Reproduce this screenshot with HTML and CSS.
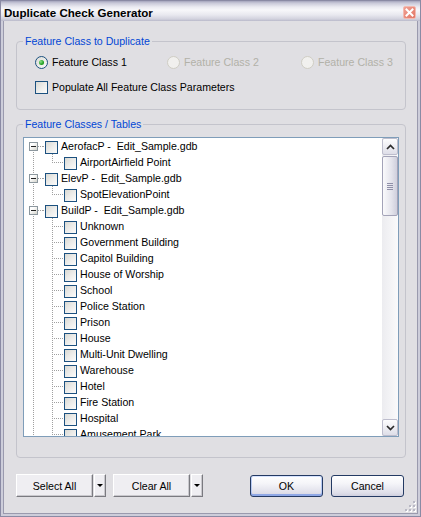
FILE: index.html
```html
<!DOCTYPE html>
<html>
<head>
<meta charset="utf-8">
<title>Duplicate Check Generator</title>
<link rel="stylesheet" href="styles.css">
</head>
<body>
<div class="window">
  <div class="titlebar">
    <span class="title">Duplicate Check Generator</span>
    <span class="close"><svg width="11" height="11" viewBox="0 0 11 11"><path d="M2.5 2.5 L8.5 8.5 M8.5 2.5 L2.5 8.5" stroke="#fff" stroke-width="2" stroke-linecap="square"/></svg></span>
  </div>
  <div class="client">
    <fieldset class="group g1">
      <legend>Feature Class to Duplicate</legend>
      <div class="inner">
        <div class="radios">
          <label class="opt w1"><span class="radio checked"></span><span class="otext">Feature Class 1</span></label>
          <label class="opt w2 disabled"><span class="radio"></span><span class="otext">Feature Class 2</span></label>
          <label class="opt disabled"><span class="radio"></span><span class="otext">Feature Class 3</span></label>
        </div>
        <label class="opt populate"><span class="cb"></span><span class="otext">Populate All Feature Class Parameters</span></label>
      </div>
    </fieldset>

    <fieldset class="group g2">
      <legend>Feature Classes / Tables</legend>
      <div class="inner">
        <div class="tree">
          <div class="rows">
            <div class="row"><span class="c1 root first"><span class="exp"></span></span><span class="c2r"><span class="cb"></span></span><span class="lbl">AerofacP -  Edit_Sample.gdb</span></div>
            <div class="row"><span class="c1 line"></span><span class="c2c last"></span><span class="cb"></span><span class="lbl">AirportAirfield Point</span></div>
            <div class="row"><span class="c1 root"><span class="exp"></span></span><span class="c2r"><span class="cb"></span></span><span class="lbl">ElevP -  Edit_Sample.gdb</span></div>
            <div class="row"><span class="c1 line"></span><span class="c2c last"></span><span class="cb"></span><span class="lbl">SpotElevationPoint</span></div>
            <div class="row"><span class="c1 root"><span class="exp"></span></span><span class="c2r"><span class="cb"></span></span><span class="lbl">BuildP -  Edit_Sample.gdb</span></div>
            <div class="row"><span class="c1 line"></span><span class="c2c"></span><span class="cb"></span><span class="lbl">Unknown</span></div>
            <div class="row"><span class="c1 line"></span><span class="c2c"></span><span class="cb"></span><span class="lbl">Government Building</span></div>
            <div class="row"><span class="c1 line"></span><span class="c2c"></span><span class="cb"></span><span class="lbl">Capitol Building</span></div>
            <div class="row"><span class="c1 line"></span><span class="c2c"></span><span class="cb"></span><span class="lbl">House of Worship</span></div>
            <div class="row"><span class="c1 line"></span><span class="c2c"></span><span class="cb"></span><span class="lbl">School</span></div>
            <div class="row"><span class="c1 line"></span><span class="c2c"></span><span class="cb"></span><span class="lbl">Police Station</span></div>
            <div class="row"><span class="c1 line"></span><span class="c2c"></span><span class="cb"></span><span class="lbl">Prison</span></div>
            <div class="row"><span class="c1 line"></span><span class="c2c"></span><span class="cb"></span><span class="lbl">House</span></div>
            <div class="row"><span class="c1 line"></span><span class="c2c"></span><span class="cb"></span><span class="lbl">Multi-Unit Dwelling</span></div>
            <div class="row"><span class="c1 line"></span><span class="c2c"></span><span class="cb"></span><span class="lbl">Warehouse</span></div>
            <div class="row"><span class="c1 line"></span><span class="c2c"></span><span class="cb"></span><span class="lbl">Hotel</span></div>
            <div class="row"><span class="c1 line"></span><span class="c2c"></span><span class="cb"></span><span class="lbl">Fire Station</span></div>
            <div class="row"><span class="c1 line"></span><span class="c2c"></span><span class="cb"></span><span class="lbl">Hospital</span></div>
            <div class="row"><span class="c1 line"></span><span class="c2c"></span><span class="cb"></span><span class="lbl">Amusement Park</span></div>
          </div>
          <div class="vscroll">
            <div class="sbtn"><svg width="9" height="6" viewBox="0 0 9 6"><path d="M1 5 L4.5 1.5 L8 5" fill="none" stroke="#2b2b2b" stroke-width="1.7"/></svg></div>
            <div class="thumb"><span class="grip"></span></div>
            <div class="track"></div>
            <div class="sbtn"><svg width="9" height="6" viewBox="0 0 9 6"><path d="M1 1 L4.5 4.5 L8 1" fill="none" stroke="#2b2b2b" stroke-width="1.7"/></svg></div>
          </div>
        </div>
      </div>
    </fieldset>

    <div class="buttons">
      <div class="split">
        <span class="cbtn main">Select All</span>
        <span class="cbtn drop"><span class="tri"></span></span>
      </div>
      <div class="split second">
        <span class="cbtn main">Clear All</span>
        <span class="cbtn drop"><span class="tri"></span></span>
      </div>
      <span class="spacer"></span>
      <span class="xbtn default">OK</span>
      <span class="xbtn">Cancel</span>
    </div>

    <span class="grip-corner"><svg width="12" height="12" viewBox="0 0 12 12">
      <g fill="#fff"><rect x="10" y="2" width="2" height="2"/><rect x="10" y="6" width="2" height="2"/><rect x="6" y="6" width="2" height="2"/><rect x="10" y="10" width="2" height="2"/><rect x="6" y="10" width="2" height="2"/><rect x="2" y="10" width="2" height="2"/></g>
      <g fill="#b8b8c4"><rect x="9" y="1" width="2" height="2"/><rect x="9" y="5" width="2" height="2"/><rect x="5" y="5" width="2" height="2"/><rect x="9" y="9" width="2" height="2"/><rect x="5" y="9" width="2" height="2"/><rect x="1" y="9" width="2" height="2"/></g>
    </svg></span>
  </div>
</div>
</body>
</html>
```

FILE: styles.css
```css
* { box-sizing: border-box; }
html, body { margin: 0; padding: 0; background: #ffffff; }
body {
  font-family: "Liberation Sans", Arial, sans-serif;
  font-size: 10.6px;
  color: #000;
}

.window {
  width: 421px;
  height: 517px;
  display: flex;
  flex-direction: column;
  border: 1px solid #8a8aa4;
  background: #e0dfe3;
}

.titlebar {
  height: 20px;
  flex: none;
  display: flex;
  justify-content: space-between;
  align-items: flex-start;
  padding: 4px 4px 0 3px;
  background: linear-gradient(to bottom, #a4a4bc 0, #c8c8d8 2px, #ebebf2 6px, #f7f7fa 9px, #e8e8ef 14px, #d2d2de 18px, #b9b9ca 20px);
}
.title {
  font-weight: bold;
  font-size: 11.6px;
  line-height: 16px;
  color: #000;
}
.close {
  margin-top: 1px;
  width: 13px;
  height: 13px;
  border: 1px solid #f3b9b0;
  border-radius: 2px;
  background: linear-gradient(135deg, #f0a093, #e27766);
  display: flex;
  align-items: center;
  justify-content: center;
}
.close svg { display: block; }

.client {
  flex: 1;
  position: relative;
  display: flex;
  flex-direction: column;
  padding: 14px 12px 0 13px;
  border: 2px solid #cdcdda;
  border-top: 0;
  box-shadow: inset 1px 0 #9a9aae, inset -1px 0 #9a9aae, inset 0 -1px #9a9aae;
}

.group {
  margin: 0;
  padding: 0;
  min-width: 0;
  border: 1px solid #c4c4cc;
  border-radius: 4px;
}
.group legend {
  margin-left: 6px;
  padding: 0 2px;
  color: #0046d5;
  line-height: 13px;
  font-size: 10.6px;
}

.g1 .inner { padding: 6px 0 14px 18px; }
.radios { display: flex; height: 16px; }
.opt { display: flex; align-items: center; height: 16px; }
.opt.w1 { width: 132px; }
.opt.w2 { width: 134px; }
.otext { margin-left: 4px; line-height: 16px; white-space: nowrap; }
.opt.disabled .otext { color: #b2b1a8; }
.populate { margin-top: 9px; }

.radio {
  width: 13px;
  height: 13px;
  flex: none;
  border: 1px solid #1c5180;
  border-radius: 50%;
  background: linear-gradient(135deg, #dcdcd7, #fbfbf9);
  display: flex;
  align-items: center;
  justify-content: center;
}
.radio.checked::after {
  content: "";
  width: 5px;
  height: 5px;
  border-radius: 50%;
  background: radial-gradient(circle at 35% 35%, #8fe08a, #21a121 60%, #1a7a1a);
}
.opt.disabled .radio {
  border-color: #cfcdc4;
  background: #f1f0ee;
}

.cb {
  display: block;
  width: 13px;
  height: 13px;
  flex: none;
  border: 1px solid #1c5180;
  background: linear-gradient(135deg, #d9d9d3 0%, #ececea 50%, #fcfcfb 100%);
}

.g2 { margin-top: 8px; }
.g2 .inner { padding: 6px 6px 20px 6px; }

.tree {
  height: 300px;
  display: flex;
  border: 1px solid #7f9db9;
  background: #fff;
}
.rows {
  flex: 1;
  overflow: hidden;
  min-width: 0;
}
.row {
  display: flex;
  align-items: flex-start;
  height: 16px;
  white-space: pre;
}
.lbl { margin-left: 3px; line-height: 16px; }
.row .cb { margin-top: 3px; }

.c1, .c2r, .c2c { display: block; flex: none; height: 16px; }
.c1 { width: 19px; }
.c1.root {
  padding: 4px 0 0 5px;
  background:
    repeating-linear-gradient(to bottom, #a0a0a0 0 1px, transparent 1px 2px) 9px 0 / 1px 100% no-repeat,
    repeating-linear-gradient(to right, #a0a0a0 0 1px, transparent 1px 2px) 14px 8px / 5px 1px no-repeat;
}
.c1.root.first {
  background:
    repeating-linear-gradient(to bottom, #a0a0a0 0 1px, transparent 1px 2px) 9px 12px / 1px 4px no-repeat,
    repeating-linear-gradient(to right, #a0a0a0 0 1px, transparent 1px 2px) 14px 8px / 5px 1px no-repeat;
}
.c1.line {
  background: repeating-linear-gradient(to bottom, #a0a0a0 0 1px, transparent 1px 2px) 9px 0 / 1px 100% no-repeat;
}
.c2r {
  width: 15px;
  padding-left: 2px;
  background: repeating-linear-gradient(to right, #a0a0a0 0 1px, transparent 1px 2px) 0 8px / 2px 1px no-repeat;
}
.c2c {
  width: 21px;
  background:
    repeating-linear-gradient(to bottom, #a0a0a0 0 1px, transparent 1px 2px) 9px 0 / 1px 100% no-repeat,
    repeating-linear-gradient(to right, #a0a0a0 0 1px, transparent 1px 2px) 11px 8px / 10px 1px no-repeat;
}
.c2c.last {
  background:
    repeating-linear-gradient(to bottom, #a0a0a0 0 1px, transparent 1px 2px) 9px 0 / 1px 9px no-repeat,
    repeating-linear-gradient(to right, #a0a0a0 0 1px, transparent 1px 2px) 11px 8px / 10px 1px no-repeat;
}

.exp {
  display: block;
  width: 9px;
  height: 9px;
  border: 1px solid #8c979e;
  background:
    linear-gradient(#222, #222) center / 5px 1px no-repeat,
    linear-gradient(135deg, #ffffff 30%, #d4d4cc);
}

.vscroll {
  width: 16px;
  flex: none;
  display: flex;
  flex-direction: column;
  background: linear-gradient(to right, #ececf0, #fafafb);
}
.sbtn {
  height: 17px;
  flex: none;
  border: 1px solid #bdbdcd;
  border-radius: 2px;
  background: linear-gradient(to bottom, #fdfdfe, #dedee8);
  display: flex;
  align-items: center;
  justify-content: center;
}
.sbtn svg { display: block; }
.thumb {
  height: 60px;
  flex: none;
  margin-top: 1px;
  border: 1px solid #a3a3b8;
  border-radius: 2px;
  background: linear-gradient(to right, #fafafc, #e4e4ec 60%, #cfcfdc);
  display: flex;
  align-items: center;
  justify-content: center;
}
.grip {
  width: 6px;
  height: 7px;
  background: repeating-linear-gradient(to bottom, #8f8fa8 0 1px, transparent 1px 2px);
}
.track { flex: 1; }

.buttons {
  display: flex;
  align-items: flex-start;
  margin-top: 16px;
  padding-right: 2px;
  height: 23px;
}
.split { display: flex; gap: 1px; }
.split.second { margin-left: 7px; }
.cbtn {
  height: 23px;
  display: flex;
  align-items: center;
  justify-content: center;
  background: #efeef2;
  border-top: 1px solid #ffffff;
  border-left: 1px solid #ffffff;
  border-right: 1px solid #7a7a80;
  border-bottom: 1px solid #7a7a80;
  box-shadow: inset -1px -1px #c9c8cd;
}
.cbtn.main { width: 77px; }
.cbtn.drop { width: 12px; }
.tri {
  width: 0;
  height: 0;
  border-left: 3px solid transparent;
  border-right: 3px solid transparent;
  border-top: 3px solid #000;
}
.spacer { flex: 1; }
.xbtn {
  width: 73px;
  height: 22px;
  margin-top: 1px;
  margin-left: 8px;
  display: flex;
  align-items: center;
  justify-content: center;
  border: 1px solid #243a63;
  border-radius: 3px;
  background: linear-gradient(to bottom, #ffffff 0%, #f4f4f8 40%, #dedee9 85%, #cfcfde 100%);
}
.xbtn.default {
  box-shadow: inset 0 1px #d6e3ff, inset 0 -2px #8fa8e6, inset 1px 0 #b8caf2, inset -1px 0 #b8caf2;
}

.grip-corner {
  position: absolute;
  right: 2px;
  bottom: 2px;
  width: 12px;
  height: 12px;
}
.grip-corner svg { display: block; }
```
